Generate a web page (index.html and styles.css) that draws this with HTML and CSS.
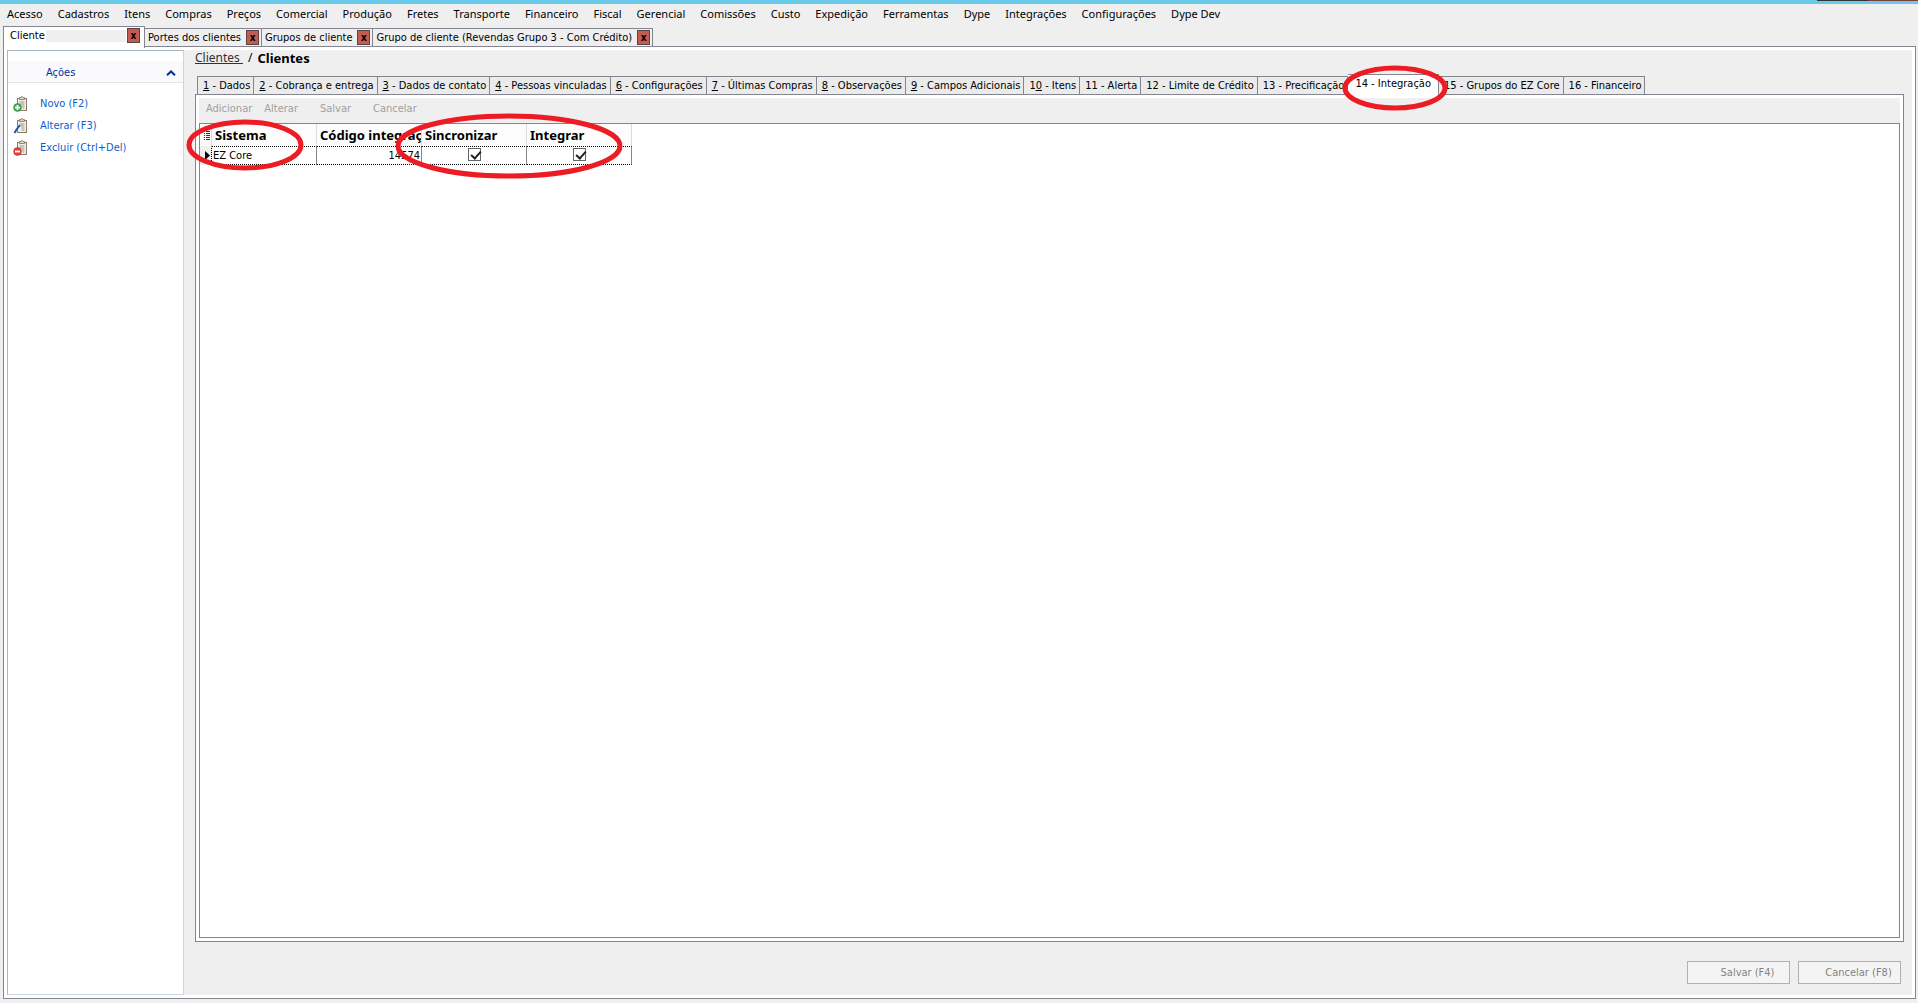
FILE: index.html
```
<!DOCTYPE html>
<html lang="pt-BR">
<head>
  <meta charset="UTF-8">
  <meta name="viewport" content="width=device-width, initial-scale=1.0">
  <title>Clientes</title>
  <link rel="stylesheet" href="styles.css">
</head>
<body>
  <div class="titlebar"><span class="window-buttons"></span></div>

  <nav class="menu">
    <a href="#">Acesso</a>
    <a href="#">Cadastros</a>
    <a href="#">Itens</a>
    <a href="#">Compras</a>
    <a href="#">Preços</a>
    <a href="#">Comercial</a>
    <a href="#">Produção</a>
    <a href="#">Fretes</a>
    <a href="#">Transporte</a>
    <a href="#">Financeiro</a>
    <a href="#">Fiscal</a>
    <a href="#">Gerencial</a>
    <a href="#">Comissões</a>
    <a href="#">Custo</a>
    <a href="#">Expedição</a>
    <a href="#">Ferramentas</a>
    <a href="#">Dype</a>
    <a href="#">Integrações</a>
    <a href="#">Configurações</a>
    <a href="#">Dype Dev</a>
  </nav>

  <div class="windows">
    <div class="window-tab active"><span class="window-name">Cliente</span><button class="close" aria-label="Fechar Cliente">x</button></div>
    <div class="window-tab"><span class="window-name">Portes dos clientes</span><button class="close" aria-label="Fechar Portes dos clientes">x</button></div>
    <div class="window-tab"><span class="window-name">Grupos de cliente</span><button class="close" aria-label="Fechar Grupos de cliente">x</button></div>
    <div class="window-tab"><span class="window-name">Grupo de cliente (Revendas Grupo 3 - Com Crédito)</span><button class="close" aria-label="Fechar Grupo de cliente">x</button></div>
  </div>

  <div class="workspace">
    <aside class="sidebar">
      <button class="sidebar-head">
        <span>Ações</span>
        <svg width="10" height="6" viewBox="0 0 10 6"><path d="M1 5.200L5 1.400L9 5.200" fill="none" stroke="#00309c" stroke-width="2"/></svg>
      </button>
      <ul class="actions">
        <li>
          <a href="#">
            <svg width="16" height="16" viewBox="0 0 16 16">
              <rect x="4.500" y="2.500" width="9" height="12" fill="#f4efe6" stroke="#8b7b68"/>
              <path d="M6.500 3.500v-2h1.500a1 1 0 0 1 2 0h1.500v2z" fill="#d8d4cc" stroke="#7d7770" stroke-width=".8"/>
              <path d="M6.500 6h5M6.500 8h5M8.500 10h3M9.500 12h2" stroke="#9a9792"/>
              <circle cx="4.500" cy="11.500" r="3.900" fill="#4bab5f" stroke="#2c8547" stroke-width=".6"/>
              <path d="M2 11.500h5M4.500 9v5" stroke="#fff" stroke-width="1.700"/>
            </svg>
            Novo (F2)
          </a>
        </li>
        <li>
          <a href="#">
            <svg width="16" height="16" viewBox="0 0 16 16">
              <rect x="4.500" y="2.500" width="9" height="12" fill="#f4efe6" stroke="#8b7b68"/>
              <path d="M6.500 3.500v-2h1.500a1 1 0 0 1 2 0h1.500v2z" fill="#d8d4cc" stroke="#7d7770" stroke-width=".8"/>
              <path d="M6.500 6h5M7.500 8h4M8.500 10h3M8.500 12h3" stroke="#9a9792"/>
              <path d="M1.500 15L3.500 11.500L7 7" fill="none" stroke="#1d5fa8" stroke-width="2"/>
            </svg>
            Alterar (F3)
          </a>
        </li>
        <li>
          <a href="#">
            <svg width="16" height="16" viewBox="0 0 16 16">
              <rect x="4.500" y="2.500" width="9" height="12" fill="#f4efe6" stroke="#8b7b68"/>
              <path d="M6.500 3.500v-2h1.500a1 1 0 0 1 2 0h1.500v2z" fill="#d8d4cc" stroke="#7d7770" stroke-width=".8"/>
              <path d="M6.500 6h5M6.500 8h5M8.500 10h3M9.500 12h2" stroke="#9a9792"/>
              <circle cx="4.500" cy="11.500" r="3.900" fill="#e2453c" stroke="#b92c26" stroke-width=".6"/>
              <path d="M2 11.500h5" stroke="#fff" stroke-width="1.800"/>
            </svg>
            Excluir (Ctrl+Del)
          </a>
        </li>
      </ul>
    </aside>

    <main class="content">
      <div class="breadcrumb"><a href="#">Clientes </a><span>/</span><strong>Clientes</strong></div>

      <div class="tabs">
        <button class="tab"><u>1</u> - Dados</button>
        <button class="tab"><u>2</u> - Cobrança e entrega</button>
        <button class="tab"><u>3</u> - Dados de contato</button>
        <button class="tab"><u>4</u> - Pessoas vinculadas</button>
        <button class="tab"><u>6</u> - Configurações</button>
        <button class="tab"><u>7</u> - Últimas Compras</button>
        <button class="tab"><u>8</u> - Observações</button>
        <button class="tab"><u>9</u> - Campos Adicionais</button>
        <button class="tab">1<u>0</u> - Itens</button>
        <button class="tab">11 - Alerta</button>
        <button class="tab">12 - Limite de Crédito</button>
        <button class="tab">13 - Precificação</button>
        <button class="tab active">14 - Integração
          <svg class="mark mark-tab" viewBox="0 0 106 48"><ellipse cx="53" cy="24" rx="50" ry="20"/></svg>
        </button>
        <button class="tab">15 - Grupos do EZ Core</button>
        <button class="tab">16 - Financeiro</button>
      </div>

      <section class="panel">
        <div class="toolbar">
          <button disabled>Adicionar</button>
          <button disabled>Alterar</button>
          <button disabled>Salvar</button>
          <button disabled>Cancelar</button>
        </div>
        <div class="grid">
          <table>
            <thead>
              <tr>
                <th class="indicator"><svg width="6" height="9" viewBox="0 0 6 9"><path d="M0 .500h1M2 .500h4M0 2.500h1M2 2.500h4M0 4.500h1M2 4.500h4M0 6.500h1M2 6.500h4M0 8.500h1M2 8.500h4" stroke="#333"/></svg></th>
                <th>Sistema</th>
                <th>Código integração</th>
                <th>Sincronizar</th>
                <th>Integrar</th>
              </tr>
            </thead>
            <tbody>
              <tr>
                <td class="indicator"><svg width="5" height="9" viewBox="0 0 5 9"><path d="M0 0L5 4.500L0 9z"/></svg></td>
                <td>EZ Core</td>
                <td class="number">14574</td>
                <td class="check"><input type="checkbox" aria-label="Sincronizar" checked></td>
                <td class="check"><input type="checkbox" aria-label="Integrar" checked></td>
              </tr>
            </tbody>
          </table>
          <svg class="mark mark-system" viewBox="0 0 118 54"><ellipse cx="59" cy="27" rx="56" ry="23"/></svg>
          <svg class="mark mark-sync" viewBox="0 0 230 66"><ellipse cx="115" cy="33" rx="111" ry="30"/></svg>
        </div>
      </section>

      <div class="footer">
        <button disabled>Salvar (F4)</button>
        <button disabled>Cancelar (F8)</button>
      </div>
    </main>
  </div>
</body>
</html>
```
FILE: styles.css
```
* { box-sizing: border-box; }
body {
  margin: 0;
  height: 100vh;
  display: flex;
  flex-direction: column;
  background: #efefef;
  color: #000;
  font-family: "DejaVu Sans Condensed", "DejaVu Sans", sans-serif;
  font-stretch: condensed;
  font-size: 11px;
  line-height: 14px;
}
a { color: inherit; text-decoration: none; }
button {
  font: inherit;
  color: inherit;
  margin: 0;
  padding: 0;
  border: 0;
  background: none;
}

.titlebar {
  height: 4px;
  flex: none;
  background: #69caea;
}
.window-buttons {
  display: block;
  width: 101px;
  height: 1px;
  margin-left: auto;
  background: linear-gradient(90deg, #333 50%, #7b3f3f 50%);
}
.menu {
  display: flex;
  gap: 15px;
  padding: 3px 7px 5px;
  font-family: "Noto Sans", sans-serif;
  font-size: 11px;
}

/* open windows */
.windows {
  display: flex;
  align-items: flex-end;
  height: 20px;
  padding-left: 3px;
}
.window-tab {
  display: flex;
  align-items: center;
  height: 18px;
  padding: 0 2px 0 3px;
  border: 1px solid #85858f;
  border-left: 0;
  border-bottom: 0;
}
.window-tab.active {
  position: relative;
  width: 142px;
  height: 22px;
  margin-bottom: -2px;
  padding: 0 4px 4px 6px;
  border-left: 1px solid #85858f;
  background: linear-gradient(#efefef, #efefef) 42px 3px / 80px 12px no-repeat #fff;
}
.window-name { margin-right: auto; }
.close {
  width: 13px;
  height: 15px;
  margin-left: 5px;
  border: 1px solid #5c4444;
  background: #c35b50;
  font-size: 10px;
  font-weight: bold;
  line-height: 11px;
}

.workspace {
  flex: 1;
  display: flex;
  min-height: 0;
  margin: 0 2px 4px 3px;
  padding: 3px;
  border: 1px solid #85858f;
  background: #fff;
}

/* left pane */
.sidebar {
  width: 177px;
  flex: none;
  border: 1px solid #c9d6e2;
  border-top-color: #a9b8c4;
  border-left-color: #a9b8c4;
  background: #fff;
}
.sidebar-head {
  display: flex;
  align-items: center;
  justify-content: space-between;
  width: 100%;
  height: 32px;
  padding: 12px 7px 0 38px;
  border-bottom: 1px solid #e4e4e8;
  background: linear-gradient(#fff 10px, #fafafd 10px);
  color: #00309c;
}
.actions {
  margin: 10px 0 0;
  padding: 0;
  list-style: none;
}
.actions a {
  display: flex;
  align-items: center;
  gap: 11px;
  height: 22px;
  padding-left: 5px;
  color: #0b5fcb;
}

.content {
  flex: 1;
  display: flex;
  flex-direction: column;
  min-width: 0;
  padding: 0 8px 0 11px;
  background: #efefef;
}
.breadcrumb {
  display: flex;
  gap: 5px;
  padding: 1px 0 9px;
  font-family: "Noto Sans", sans-serif;
  font-size: 12px;
  white-space: pre;
}
.breadcrumb a {
  color: #333;
  text-decoration: underline;
}
.breadcrumb strong { font-size: 13px; }

/* record tabs */
.tabs {
  display: flex;
  align-items: flex-end;
  height: 20px;
  padding-left: 2px;
}
.tab {
  height: 18px;
  padding: 0 3px 0 5px;
  border: 1px solid #85858f;
  border-left: 0;
  border-bottom: 0;
  background: #ebebeb;
  white-space: nowrap;
}
.tab:first-child { border-left: 1px solid #85858f; }
.tab.active {
  position: relative;
  height: 22px;
  margin-bottom: -2px;
  padding: 0 7px 4px;
  background: #fff;
}

.panel {
  flex: 1;
  display: flex;
  flex-direction: column;
  padding: 3px;
  border: 1px solid #85858f;
  background: #fff;
}
.toolbar {
  display: flex;
  gap: 12px;
  height: 25px;
  padding: 0 0 4px 7px;
  background: #efefef;
  color: #a0a0a0;
}
.toolbar button:nth-child(n+3) { margin-left: 10px; }
.grid {
  position: relative;
  flex: 1;
  border: 1px solid #85858f;
  background: #fff;
}
table {
  width: 432px;
  table-layout: fixed;
  border-collapse: separate;
  border-spacing: 0;
}
th {
  height: 22px;
  padding: 0 0 0 3px;
  border-right: 1px solid #dcdcdc;
  background: #fcfcfc;
  font-family: "Noto Sans", sans-serif;
  font-size: 13px;
  text-align: left;
  white-space: nowrap;
  overflow: hidden;
}
td {
  height: 19px;
  padding: 0 1px;
  border-top: 1px dotted #000;
  border-bottom: 1px dotted #000;
  border-right: 1px solid #85858f;
}
.indicator {
  width: 12px;
  padding: 0;
}
td.indicator {
  border-top-color: transparent;
  border-bottom-color: transparent;
  border-right: 1px dotted #000;
  background: #efefef;
}
.indicator svg { display: block; margin: 0 1px 0 auto; }
.number { text-align: right; }
.check { padding-bottom: 2px; }
.check input {
  appearance: none;
  display: block;
  width: 13px;
  height: 13px;
  margin: 0 auto;
  border: 1px solid #666;
  background: #fff;
}
.check input:checked::before {
  content: "";
  display: block;
  width: 8px;
  height: 4px;
  margin: 2px;
  border: solid #222;
  border-width: 0 0 2px 2px;
  transform: rotate(-48deg);
}

/* red annotation marks */
.mark {
  position: absolute;
  fill: none;
  stroke: #ed1c24;
  stroke-width: 5px;
  pointer-events: none;
  z-index: 2;
}
.mark-tab { left: -6px; top: -11px; width: 106px; height: 48px; }
.mark-system { left: -14px; top: -6px; width: 118px; height: 54px; }
.mark-sync { left: 194px; top: -11px; width: 230px; height: 66px; }

.footer {
  display: flex;
  justify-content: flex-end;
  gap: 8px;
  padding: 19px 3px 11px;
}
.footer button {
  width: 103px;
  height: 23px;
  padding-left: 18px;
  border: 1px solid #adb2b5;
  background: #f4f4f4;
  color: #838383;
}
```
